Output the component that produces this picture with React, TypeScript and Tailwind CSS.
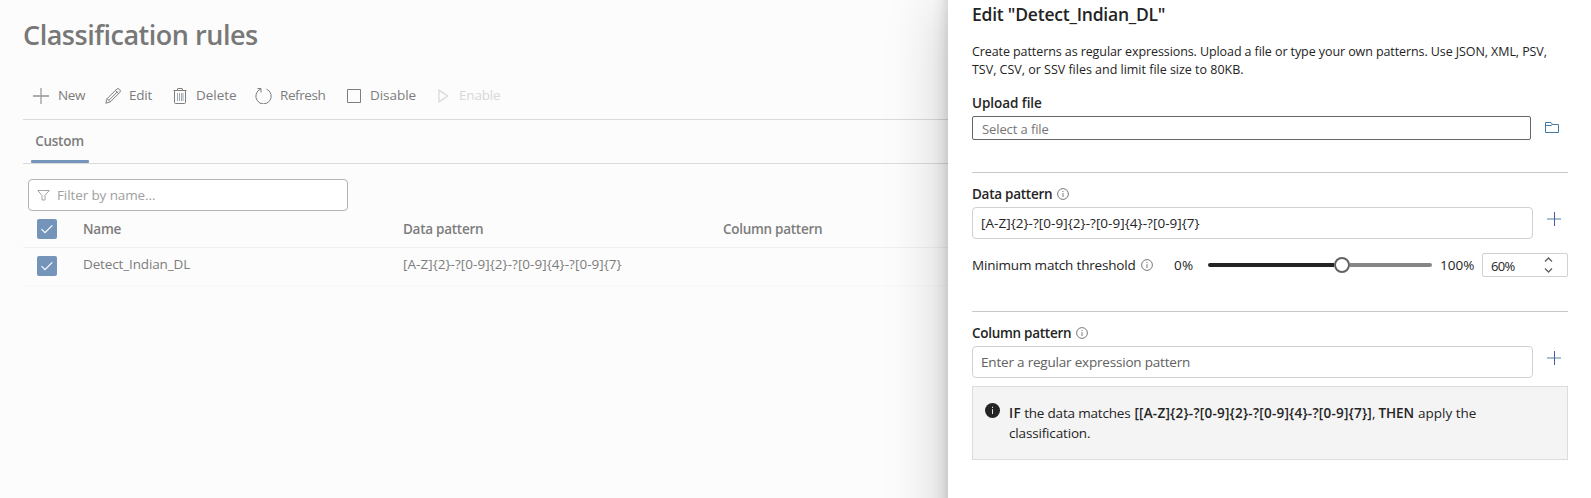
import type { ReactNode } from "react";

function Check() {
  return (
    <span className="flex h-5 w-5 shrink-0 items-center justify-center rounded-[2px] bg-[#7495b9]">
      <svg width="14" height="14" viewBox="0 0 14 14" fill="none" stroke="#fff" strokeWidth="1.15">
        <path d="M1.5 7.2 5 10.7 12.3 3.4" />
      </svg>
    </span>
  );
}

function Info() {
  return (
    <svg width="12" height="12" viewBox="0 0 12 12" fill="none" stroke="#6a6a6a" strokeWidth="0.9">
      <circle cx="6" cy="6" r="5.4" />
      <path d="M6 5.1V9M6 3V4.1" />
    </svg>
  );
}

function Plus() {
  return (
    <svg width="14" height="14" viewBox="0 0 14 14" fill="none">
      <path d="M0 7H14" stroke="#a9c0d0" strokeWidth="2" />
      <path d="M7.5 0V14" stroke="#4a5aa8" />
    </svg>
  );
}

function Tool({ icon, className, children }: { icon: ReactNode; className: string; children: ReactNode }) {
  return (
    <div className={`flex h-4 shrink-0 items-center ${className}`}>
      {icon}
      <span className="relative -top-px">{children}</span>
    </div>
  );
}

function Toolbar() {
  return (
    <div className="flex h-12 items-center border-b border-[#dadada] pt-px pl-[10px]">
      <Tool
        className="w-[72px] gap-[9px] tracking-[-0.025em]"
        icon={
          <svg width="16" height="16" viewBox="0 0 16 16" fill="none">
            <path d="M0 8H16" stroke="#acacac" strokeWidth="2" />
            <path d="M8 0V16" stroke="#9d9d9d" strokeWidth="1.3" />
          </svg>
        }
      >
        New
      </Tool>
      <Tool
        className="w-[68px] gap-2 tracking-[-0.018em]"
        icon={
          <svg width="16" height="16" viewBox="0 0 16 16" fill="none" stroke="#7e7e7e" strokeWidth="1">
            <path d="M.8 15.2 2.1 10.7 11.7 1.1Q13 0 14.6 1.4 16 3 14.9 4.3L5.3 13.9ZM10.4 2.4 13.6 5.6M2.1 10.7 5.3 13.9M4 12.2 12.6 3.6" />
          </svg>
        }
      >
        Edit
      </Tool>
      <Tool
        className="w-[82px] gap-[9px] tracking-[-0.003em]"
        icon={
          <svg width="14" height="16" viewBox="0 0 14 16" fill="none" stroke="#7e7e7e" strokeWidth="1">
            <path d="M.5 2.5H13.5M4.5 2.5V1Q4.5.5 5 .5H9Q9.5.5 9.5 1V2.5M1.5 2.5V14.5Q1.5 15.5 2.5 15.5H11.5Q12.5 15.5 12.5 14.5V2.5" />
            <path d="M4.5 5V13M6.500 5V13M8.500 5V13M10 5V13" stroke="#a0a8b0" />
          </svg>
        }
      >
        Delete
      </Tool>
      <Tool
        className="w-[92px] gap-2 tracking-[-0.031em]"
        icon={
          <svg width="17" height="16" viewBox="0 0 17 16" fill="none" stroke="#7e7e7e" strokeWidth="1">
            <path d="M2.500.5H6V4.500M5.800 1A7.700 7.700 0 1 0 11.500 1.100" />
          </svg>
        }
      >
        Refresh
      </Tool>
      <Tool
        className="w-[91px] gap-[9px] tracking-[-0.004em]"
        icon={
          <svg width="14" height="14" viewBox="0 0 14 14" fill="none" stroke="#7e7e7e">
            <path d="M.5.5H13.5V13.5H.5Z" />
          </svg>
        }
      >
        Disable
      </Tool>
      <Tool
        className="gap-[10px] tracking-[-0.014em] text-[#d8d8d8]"
        icon={
          <svg width="11" height="14" viewBox="0 0 11 14" fill="none" stroke="#d8d8d8" strokeWidth="1.2">
            <path d="M1 1.2V12.8L9.8 7Z" />
          </svg>
        }
      >
        Enable
      </Tool>
    </div>
  );
}

function RulesPage() {
  return (
    <main className="w-[948px] shrink-0 pl-[23px] text-[13.5px] leading-5 whitespace-nowrap text-[#7c7c7c]">
      <h1 className="flex h-[72px] items-center text-[27px] font-semibold tracking-[-0.018em] text-[#787878]">
        <span className="relative -top-px">Classification rules</span>
      </h1>
      <Toolbar />
      <div className="flex h-11 border-b border-[#dadada] pl-2">
        <div className="flex w-[58px] flex-col items-center justify-between pt-[11px]">
          <span className="pr-px font-semibold tracking-[-0.019em]">Custom</span>
          <span className="h-[3px] w-full rounded-[1px] bg-[#7495b9]" />
        </div>
      </div>
      <div className="pt-[15px] pl-[5px]">
        <div className="flex h-8 w-[320px] items-center gap-[7px] rounded-[4px] border border-[#b3b3b3] bg-white pl-2 text-[#a0a0a0]">
          <svg width="13" height="12" viewBox="0 0 13 12" fill="none" stroke="#a3a3a3">
            <path d="M.8 1.5H12.2L8 6.5V11H5V6.5Z" />
          </svg>
          <span className="tracking-[-0.008em]">Filter by name...</span>
        </div>
      </div>
      <div className="flex h-[37px] items-center border-b border-[#f0f0f0] pl-[14px] font-semibold">
        <Check />
        <span className="w-[346px] pl-[26px] tracking-[-0.019em]">Name</span>
        <span className="w-[320px] tracking-[-0.02em]">Data pattern</span>
        <span className="tracking-[-0.021em]">Column pattern</span>
      </div>
      <div className="flex h-[38px] items-center border-b border-[#f7f7f7] pb-[2px] pl-[14px]">
        <Check />
        <span className="relative -top-[2px] w-[346px] pl-[26px] tracking-[-0.01em]">Detect_Indian_DL</span>
        <span className="relative -top-[2px] tracking-[0.003em]">{"[A-Z]{2}-?[0-9]{2}-?[0-9]{4}-?[0-9]{7}"}</span>
      </div>
    </main>
  );
}

function EditPanel() {
  return (
    <aside className="relative -mt-6 h-[900px] w-[643px] shrink-0 bg-white pt-6 pr-[23px] pl-6 text-[13.5px] leading-5 whitespace-nowrap text-[#242424] shadow-[0_25.6px_57.6px_rgba(0,0,0,0.22),0_4.8px_14.4px_rgba(0,0,0,0.18)]">
      <h2 className="h-[43px] pt-1 text-[17.5px] leading-5 font-semibold tracking-[-0.013em]">Edit "Detect_Indian_DL"</h2>
      <p className="h-[50px] text-[12.5px] leading-[18px]">
        <span className="block tracking-[-0.007em]">
          Create patterns as regular expressions. Upload a file or type your own patterns. Use JSON, XML, PSV,
        </span>
        <span className="block tracking-[-0.001em]">TSV, CSV, or SSV files and limit file size to 80KB.</span>
      </p>
      <div className="flex h-[23px] font-semibold tracking-[-0.004em]">Upload file</div>
      <div className="flex h-6 items-center gap-[14px]">
        <div className="flex h-6 w-[559px] items-center rounded-[2px] border border-[#666] pt-px pl-[9px] text-[13px] tracking-[-0.008em] text-[#757575]">
          Select a file
        </div>
        <svg width="14" height="11" viewBox="0 0 14 11" fill="none" stroke="#4478a5" className="relative -top-px">
          <path d="M.5 10.5V.5H6L7.500 2.500H13.500V10.500ZM.5 3.500H6L7.500 2.500" />
        </svg>
      </div>
      <hr className="mt-8 border-[#c8c8c8]" />
      <div className="flex h-[34px] items-center gap-[5px] pt-[7px] font-semibold tracking-[-0.02em]">
        Data pattern <Info />
      </div>
      <div className="flex h-8 gap-[14px]">
        <div className="flex w-[561px] items-center rounded-[4px] border border-[#d1d1d1] pl-2 tracking-[0.003em]">
          {"[A-Z]{2}-?[0-9]{2}-?[0-9]{4}-?[0-9]{7}"}
        </div>
        <div className="pt-[5px]">
          <Plus />
        </div>
      </div>
      <div className="mt-[14px] flex h-6 items-center">
        <div className="flex w-[202px] items-center gap-[5px] tracking-[-0.0135em]">
          Minimum match threshold <Info />
        </div>
        <span className="w-[34px] tracking-[0.02em]">0%</span>
        <div className="flex w-[224px] items-center">
          <span className="h-1 w-[126px] rounded-l-full bg-[#242424]" />
          <span className="h-4 w-4 rounded-full border-2 border-[#616161] bg-white" />
          <span className="h-1 flex-1 rounded-r-full bg-[#868686]" />
        </div>
        <span className="w-[50px] pl-2">100%</span>
        <div className="flex h-6 w-[86px] items-center justify-between rounded-[2px] border border-[#d1d1d1] pr-[14px] pl-2 text-[13px]">
          <span className="relative top-px tracking-[-0.05em]">60%</span>
          <svg width="9" height="16" viewBox="0 0 9 16" fill="none" stroke="#616161" strokeWidth="1.3">
            <path d="M1 4.5 4.5 1 8 4.5M1 11.5 4.5 15 8 11.5" />
          </svg>
        </div>
      </div>
      <hr className="mt-[34px] border-[#c8c8c8]" />
      <div className="flex h-[34px] items-center gap-[5px] pt-[7px] font-semibold tracking-[-0.021em]">
        Column pattern <Info />
      </div>
      <div className="flex h-8 gap-[14px]">
        <div className="flex w-[561px] items-center rounded-[4px] border border-[#d1d1d1] pl-2 tracking-[-0.0146em] text-[#616161]">
          Enter a regular expression pattern
        </div>
        <div className="pt-[5px]">
          <Plus />
        </div>
      </div>
      <div className="mt-2 flex h-[74px] gap-[9px] border border-[#dcdcdc] bg-[#f4f4f4] pl-3">
        <svg width="15" height="15" viewBox="0 0 15 15" className="mt-4">
          <circle cx="7.5" cy="7.5" r="7.5" fill="#242424" />
          <path d="M7.5 6.2V11M7.5 3.7V5" stroke="#e8e8e8" />
        </svg>
        <p className="pt-4">
          <span className="mr-[3px] inline-block font-semibold tracking-[0.03em]">IF</span>
          <span className="mr-1 inline-block tracking-[-0.0143em]">the data matches</span>
          <span className="inline-block font-semibold tracking-[0.0166em]">{"[[A-Z]{2}-?[0-9]{2}-?[0-9]{4}-?[0-9]{7}]"}</span>
          <span className="mr-[3px] inline-block">,</span>
          <span className="mr-1 inline-block font-semibold tracking-[-0.008em]">THEN</span>
          <span className="inline-block">apply the</span>
          <br />
          <span className="tracking-[-0.0116em]">classification.</span>
        </p>
      </div>
    </aside>
  );
}

export default function App() {
  return (
    <div className="flex h-[498px] w-[1591px] overflow-hidden bg-[#fcfcfc] font-['Open_Sans','Liberation_Sans',sans-serif]">
      <RulesPage />
      <EditPanel />
    </div>
  );
}
